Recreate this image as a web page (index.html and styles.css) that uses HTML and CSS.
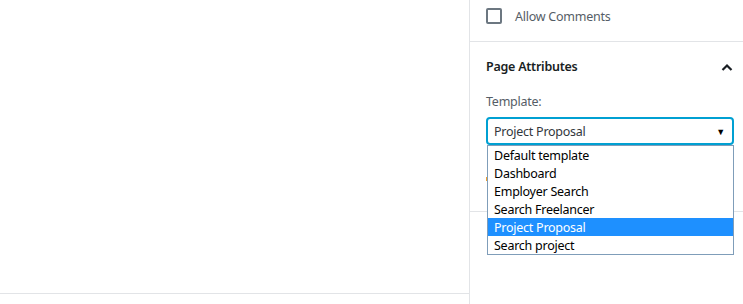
FILE: index.html
```html
<!DOCTYPE html>
<html lang="en">
<head>
    <meta charset="UTF-8">
    <title>Page Attributes</title>
    <link rel="stylesheet" href="styles.css">
</head>
<body>
    <div class="editor">
        <div class="contenido"></div>

        <div class="barra">
            <div class="panel panel-comentarios">
                <label class="opcion">
                    <span class="casilla"></span>
                    <span class="opcion-texto">Allow Comments</span>
                </label>
            </div>

            <div class="panel panel-atributos">
                <div class="panel-cabecera">
                    <span class="panel-titulo">Page Attributes</span>
                    <svg class="chevron" width="12" height="8" viewBox="0 0 12 8">
                        <path d="M1.5 7 L6 2.5 L10.5 7" fill="none" stroke="#191e23" stroke-width="2.2"/>
                    </svg>
                </div>
                <div class="campo-etiqueta">Template:</div>
                <div class="selector">
                    <div class="select">
                        <span>Project Proposal</span>
                        <span class="flecha">&#9660;</span>
                    </div>
                    <ul class="lista">
                        <li>Default template</li>
                        <li>Dashboard</li>
                        <li>Employer Search</li>
                        <li>Search Freelancer</li>
                        <li class="activo">Project Proposal</li>
                        <li>Search project</li>
                    </ul>
                </div>
                <div class="detras"><span class="marca"></span></div>
            </div>
        </div>
    </div>
</body>
</html>
```

FILE: styles.css
```css
body {
    margin: 0;
    background-color: #fff;
    font-family: 'Noto Sans', 'Open Sans', sans-serif;
    font-size: 12.5px;
    letter-spacing: -0.25px;
    color: #191e23;
}
.editor {
    display: flex;
    height: 304px;
    overflow: hidden;
}
.contenido {
    width: 469px;
    height: 293px;
    border-bottom: 1px solid #e2e4e7;
    flex-shrink: 0;
}
.barra {
    flex: 1;
    border-left: 1px solid #e2e4e7;
}
.panel {
    border-bottom: 1px solid #e2e4e7;
}
.panel-comentarios {
    height: 42px;
    box-sizing: border-box;
    padding: 8px 0 0 16px;
}
.opcion {
    display: flex;
    align-items: flex-start;
}
.casilla {
    width: 16px;
    height: 16px;
    box-sizing: border-box;
    border: 2px solid #6c7781;
    border-radius: 2px;
}
.opcion-texto {
    margin-left: 13px;
    padding-top: 1px;
    color: #555d66;
    line-height: 16px;
}
.panel-atributos {
    height: 170px;
    box-sizing: border-box;
    padding: 0 8px 0 16px;
    position: relative;
}
.panel-cabecera {
    display: flex;
    justify-content: space-between;
    align-items: center;
    height: 49px;
    padding-right: 2px;
}
.panel-titulo {
    font-weight: 600;
}
.chevron {
    display: block;
}
.campo-etiqueta {
    margin-top: 2px;
    line-height: 18px;
    color: #555d66;
}
.selector {
    position: relative;
    margin-top: 6px;
    width: 248px;
}
.select {
    height: 28px;
    box-sizing: border-box;
    border: 2px solid #00a0d2;
    border-radius: 4px;
    display: flex;
    justify-content: space-between;
    align-items: center;
    padding: 0 7px 0 6px;
    color: #32373c;
}
.flecha {
    font-size: 9px;
    color: #000;
}
.lista {
    position: absolute;
    top: 28px;
    left: 1px;
    right: 0;
    margin: 0;
    padding: 0;
    list-style: none;
    background-color: #fff;
    border: 1px solid #7f9db9;
    z-index: 2;
}
.lista li {
    height: 18px;
    line-height: 20px;
    overflow: hidden;
    padding-left: 6px;
    color: #000;
}
.lista li.activo {
    background-color: #1e90ff;
    color: #fff;
}
.detras {
    margin-top: 32px;
    height: 6px;
}
.marca {
    display: block;
    width: 1px;
    height: 4px;
    background-color: #f0a030;
}
```
